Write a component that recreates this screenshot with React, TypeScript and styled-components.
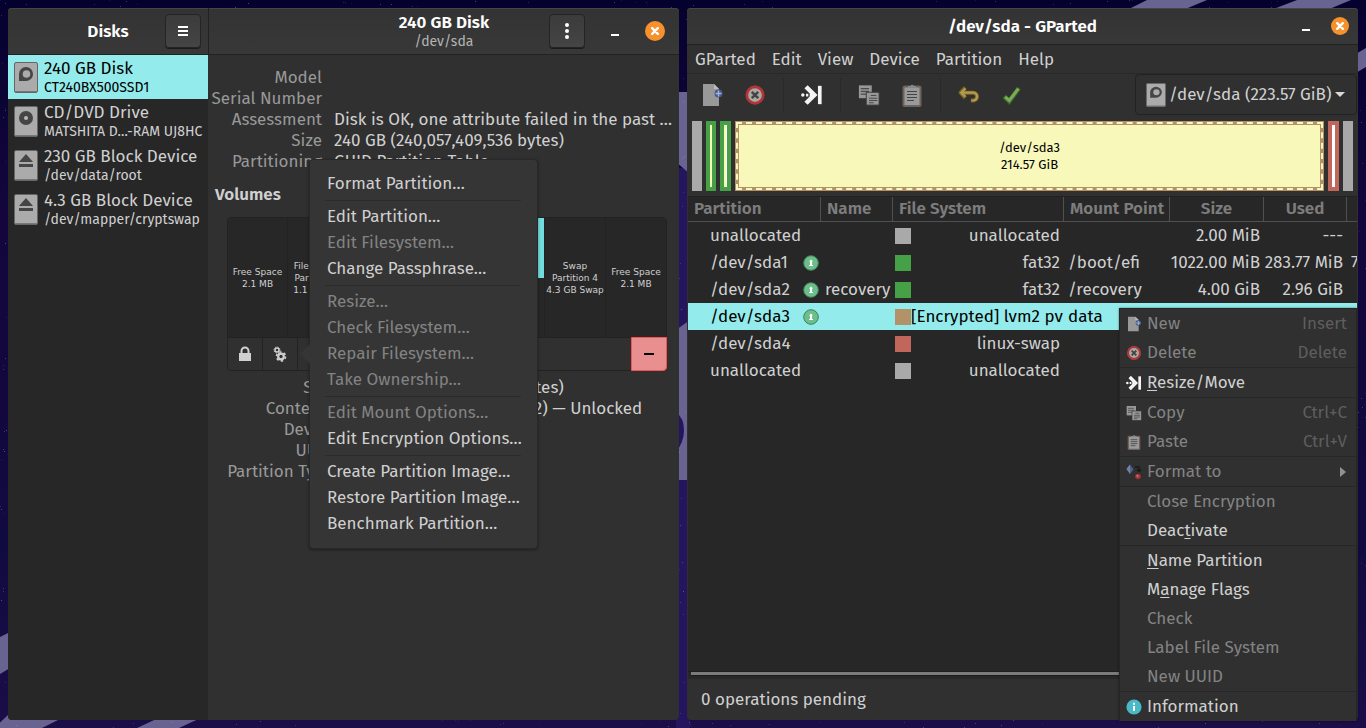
import React from "react";
import styled, { createGlobalStyle, css } from "styled-components";

const c = {
  window: "#303030",
  header: "#353535",
  view: "#272727",
  line: "#222222",
  text: "#d0d0d0",
  label: "#999999",
  dim: "#838383",
  accent: "#94ebeb",
  orange: "#f6912d",
};

const GlobalStyle = createGlobalStyle`
  *, *::before, *::after { box-sizing: border-box; }
  body {
    margin: 0;
    background: #0e0536;
    color: ${c.text};
    font: 17px/21px "Fira Sans", "Noto Sans", sans-serif;
  }
  button, select { font: inherit; color: inherit; border: 0; margin: 0; padding: 0; background: none; }
  h1, h2, p, ul, dl, dd { margin: 0; padding: 0; }
  ul { list-style: none; }
`;

/* ---------- desktop ---------- */

const Desktop = styled.div`
  position: relative;
  min-height: 100vh;
  padding: 8px;
  display: flex;
  gap: 8px;
  overflow: hidden;
`;

const WallpaperSvg = styled.svg`
  position: absolute;
  inset: 0;
  width: 100%;
  height: 100%;
`;

const stars = Array.from({ length: 3600 }, (_, i) => ({
  x: (i * 769 + ((i * i) % 97) * 13) % 1366,
  y: (i * 431 + ((i * i) % 61) * 7) % 728,
  o: 0.08 + ((i * 7) % 10) / 30,
}));

const Wallpaper = () => (
  <WallpaperSvg viewBox="0 0 1366 728" preserveAspectRatio="none" aria-hidden="true">
    <defs>
      <linearGradient id="sky" x1="0" y1="0" x2="0" y2="1">
        <stop offset="0" stopColor="#05012f" />
        <stop offset="0.3" stopColor="#14063c" />
        <stop offset="0.75" stopColor="#110a40" />
        <stop offset="1" stopColor="#1b0d48" />
      </linearGradient>
    </defs>
    <rect width="1366" height="728" fill="url(#sky)" />
    <path d="M676 168h14v560h-14z" fill="#25155f" />
    <g fill="#696391">
      <path d="M676 92h14v82l-14-12z" />
      <path d="M676 330l14-10v160h-14z" />
      <path d="M0 637l10-5v36l-10 6z" />
      <path d="M8 715h60l-26 13H-6z" />
      <path d="M165 715h42l-28 13h-42z" />
      <path d="M1147 0h60l-24 10h-56z" />
      <path d="M1297 0h54l-24 10h-56z" />
      <path d="M1354 55l12-7v19l-12 7z" />
    </g>
    <path d="M676 412q8 6 8 18t-8 22z" fill="#25155f" />
    {stars.map((s, i) => (
      <rect key={i} x={s.x} y={s.y} width="1" height="1" fill="#b5a8e0" opacity={s.o} />
    ))}
  </WallpaperSvg>
);

const Window = styled.section`
  position: relative;
  flex: 1 1 0;
  min-width: 0;
  display: flex;
  flex-direction: column;
  background: ${c.window};
  border-radius: 4px;
`;

const HeaderBar = styled.header<{ $height: number }>`
  display: flex;
  height: ${(p) => p.$height}px;
  background: linear-gradient(#333333, #383838);
  border-bottom: 1px solid ${c.line};
  border-radius: 4px 4px 0 0;
  box-shadow: inset 0 1px #454543;
`;

const HeaderArea = styled.div<{ $end: number }>`
  flex: 1;
  display: grid;
  grid-template-columns: 1fr auto 1fr;
  align-items: center;
  padding: 0 ${(p) => p.$end}px;
`;

const HeaderControls = styled.div<{ $gap: number }>`
  grid-column: 3;
  display: flex;
  justify-content: flex-end;
  align-items: center;
  gap: ${(p) => p.$gap}px;
`;

const SidebarHeader = styled.div`
  width: 201px;
  display: grid;
  grid-template-columns: 1fr auto 1fr;
  align-items: center;
  padding: 0 7px;
  border-right: 1px solid ${c.line};
`;

const TitleGroup = styled.div`
  grid-column: 2;
  text-align: center;
`;

const Title = styled.h1`
  font-size: 17px;
  line-height: 21px;
  font-weight: 600;
  color: #ffffff;
`;

const Subtitle = styled.p`
  font-size: 14px;
  line-height: 18px;
  color: #b4b4b4;
`;

const HeaderButton = styled.button`
  width: 36px;
  height: 34px;
  display: grid;
  place-items: center;
  justify-self: end;
  grid-column: 3;
  border: 1px solid #242424;
  border-radius: 4px;
  background: linear-gradient(#3b3b3b, #454545);
  box-shadow: 0 1px #1a1a1a;
`;

const MinimizeButton = styled.button`
  width: 20px;
  height: 20px;
  display: grid;
  place-items: center;
  padding-top: 7px;
  &::after { content: ""; width: 8px; height: 2px; background: #ffffff; }
`;

const CloseButton = styled.button<{ $size: number }>`
  width: ${(p) => p.$size}px;
  height: ${(p) => p.$size}px;
  display: grid;
  place-items: center;
  border-radius: 50%;
  background: ${c.orange};
`;

const CloseGlyph = () => (
  <svg width="8" height="8" viewBox="0 0 8 8" stroke="#fff" strokeWidth="2.4" strokeLinecap="round">
    <path d="M1.2 1.2l5.6 5.6M6.8 1.2L1.2 6.8" />
  </svg>
);

/* ---------- icons ---------- */

type DriveKind = "hdd" | "optical" | "removable";

const DriveIcon = ({ kind, width = 24, height = 31 }: { kind: DriveKind; width?: number; height?: number }) => (
  <svg width={width} height={height} viewBox="0 0 24 31" preserveAspectRatio="none" aria-hidden="true">
    <rect x="0.5" y="0.5" width="23" height="30" rx="1.5" fill="#ababab" stroke="#666" />
    <path d="M1 29.5h22" stroke="#777" />
    {kind === "hdd" && (
      <>
        <path d="M12 5a7 7 0 1 1 0 14H5v-7a7 7 0 0 1 7-7z" fill="#454545" />
        <circle cx="12.5" cy="12" r="3.8" fill="#ababab" />
      </>
    )}
    {kind === "optical" && (
      <>
        <circle cx="12" cy="12" r="7" fill="#454545" />
        <circle cx="12" cy="12" r="2" fill="#b8b8b8" />
      </>
    )}
    {kind === "removable" && <path d="M12 4l7 8H5zM5 14h14v3H5z" fill="#454545" />}
  </svg>
);

const NewIcon = ({ size }: { size: number }) => (
  <svg width={size} height={size} viewBox="0 0 24 24" aria-hidden="true">
    <path d="M3 1h11l5 5v17H3z" fill="#999" />
    <path d="M14 1v5h5z" fill="#bbb" />
    <circle cx="18.5" cy="10.5" r="4" fill="#46598a" />
    <path d="M15.5 10.5h6M18.5 7.5v6" stroke="#a3b4da" strokeWidth="1.5" />
  </svg>
);

const DeleteIcon = ({ size }: { size: number }) => (
  <svg width={size} height={size} viewBox="0 0 24 24" aria-hidden="true">
    <circle cx="12" cy="12" r="10" fill="#aaa7a5" stroke="#9e2a2a" />
    <circle cx="12" cy="12" r="8.8" fill="none" stroke="#b23434" strokeWidth="2.6" />
    <path d="M8.5 8.5l7 7M15.5 8.5l-7 7" stroke="#444" strokeWidth="2.8" />
  </svg>
);

const ResizeIcon = ({ size }: { size: number }) => (
  <svg width={size} height={size} viewBox="0 0 24 24" aria-hidden="true">
    <path d="M5.500 3l9 9-9 9" fill="none" stroke="#f4f4f4" strokeWidth="5" />
    <path d="M5.500 12h2.500M9.500 12h3" stroke="#f4f4f4" strokeWidth="3" />
    <circle cx="2" cy="12" r="1.9" fill="#f4f4f4" />
    <path d="M20.500 2v20" stroke="#f4f4f4" strokeWidth="4" />
  </svg>
);

const CopyIcon = ({ size }: { size: number }) => (
  <svg width={size} height={size} viewBox="0 0 24 24" aria-hidden="true">
    <rect x="1" y="1.5" width="14" height="14" fill="#989898" />
    <path d="M3 5h9M3 8h9M3 11h6" stroke="#4a4a4a" strokeWidth="1.2" />
    <rect x="9" y="9" width="14" height="14" fill="#989898" stroke="#3a3a3a" />
    <path d="M14 12.5h6M12 15.5h9M12 18h9M12 20.500h5" stroke="#4a4a4a" strokeWidth="1.2" />
  </svg>
);

const PasteIcon = ({ size }: { size: number }) => (
  <svg width={size} height={size} viewBox="0 0 24 24" aria-hidden="true">
    <rect x="3.5" y="3.5" width="17" height="19.5" rx="1" fill="#9a9a9a" stroke="#6f625b" strokeWidth="2" />
    <path d="M8 5V3h2.500a1.800 1.800 0 0 1 3.400 0H16v2z" fill="#888" />
    <path d="M7 8.5h10M7 11.5h10M7 14.5h10M7 17.5h7" stroke="#444" strokeWidth="1.2" />
  </svg>
);

const UndoIcon = ({ size }: { size: number }) => (
  <svg width={size} height={size} viewBox="0 0 24 24" fill="none" aria-hidden="true">
    <path d="M8 4L3 9.500 8 15M4 9.500h12.500a4 4 0 0 1 0 8.500H14" stroke="#7b6722" strokeWidth="4.5" strokeLinejoin="round" />
    <path d="M8 5L3.500 9.500 8 14M4 9.500h12.500a4 4 0 0 1 0 8.500H14.500" stroke="#b39b52" strokeWidth="2.4" />
  </svg>
);

const ApplyIcon = ({ size }: { size: number }) => (
  <svg width={size} height={size} viewBox="0 0 24 24" fill="none" aria-hidden="true">
    <path d="M3.500 13.500l5.500 5.500L19.500 4.500" stroke="#3d6b28" strokeWidth="5" />
    <path d="M4.500 14l4.500 4L19 5" stroke="#78ab55" strokeWidth="3.4" />
  </svg>
);

const FormatIcon = ({ size }: { size: number }) => (
  <svg width={size} height={size} viewBox="0 0 16 16" aria-hidden="true">
    <path d="M4 0.500l3.500 5L4 10 0.500 5z" fill="#4e608e" />
    <path d="M4 0.500V10L0.500 5z" fill="#72829f" />
    <path d="M9 3h4v4M11 5.500l2 2 2-2" fill="none" stroke="#191919" strokeWidth="1.3" />
    <circle cx="12" cy="12.5" r="2.8" fill="#a03434" />
    <circle cx="11.5" cy="12" r="1.2" fill="#c46a6a" />
  </svg>
);

const InfoIcon = ({ size }: { size: number }) => (
  <svg width={size} height={size} viewBox="0 0 16 16" aria-hidden="true">
    <circle cx="8" cy="8" r="7.6" fill="#49b9c7" />
    <path d="M7 3.800h2v2H7zM7 7h2v5H7z" fill="#fff" />
  </svg>
);

const MountedIcon = () => (
  <svg width="16" height="16" viewBox="0 0 16 16" role="img" aria-label="In use">
    <circle cx="8" cy="8" r="7.3" fill="#6cbf8b" stroke="#43805c" />
    <path d="M8 4.600l2 1.800H9V10h1v1H6v-1h1V6.400H6z" fill="#fff" />
  </svg>
);

const LockIcon = () => (
  <svg width="14" height="16" viewBox="0 0 14 16" aria-hidden="true">
    <path d="M3.500 7V5a3.500 3.500 0 0 1 7 0v2" fill="none" stroke="#d0d0d0" strokeWidth="2" />
    <path d="M1 7h12v8H1z" fill="#d0d0d0" />
  </svg>
);

const GearsIcon = () => (
  <svg width="16" height="16" viewBox="0 0 16 16" fill="none" stroke="#d0d0d0" aria-hidden="true">
    <circle cx="5" cy="4" r="2" strokeWidth="1.5" />
    <circle cx="5" cy="4" r="3" strokeWidth="1" strokeDasharray="1.2 1.16" />
    <circle cx="9" cy="10.500" r="2.8" strokeWidth="2.2" />
    <circle cx="9" cy="10.500" r="4.5" strokeWidth="1.6" strokeDasharray="2.4 2.31" />
  </svg>
);

/* ---------- Disks window ---------- */

const DisksBody = styled.div`
  flex: 1;
  display: flex;
`;

const Sidebar = styled.nav`
  width: 200px;
  background: ${c.view};
  border-radius: 0 0 0 4px;
`;

const DeviceLink = styled.a<{ $active?: boolean }>`
  height: 44px;
  display: flex;
  align-items: center;
  gap: 6px;
  padding-left: 6px;
  color: ${(p) => (p.$active ? "#000000" : c.text)};
  background: ${(p) => (p.$active ? c.accent : "transparent")};
  text-decoration: none;
  white-space: nowrap;
`;

const DeviceName = styled.span`
  display: block;
  line-height: 21px;
`;

const DeviceDetail = styled.span`
  display: block;
  font-size: 14px;
  line-height: 18px;
`;

const DiskContent = styled.main`
  flex: 1;
  min-width: 0;
  padding: 12px 12px 12px 0;
`;

const Facts = styled.dl<{ $label: number; $gap: number }>`
  display: grid;
  grid-template-columns: ${(p) => p.$label}px 1fr;
  column-gap: ${(p) => p.$gap}px;
  grid-auto-rows: 21px;
  white-space: nowrap;
`;

const FactLabel = styled.dt`
  color: ${c.label};
  justify-self: end;
`;

const FactValue = styled.dd``;

const SectionTitle = styled.h2`
  margin: 12px 0 12px 7px;
  font-size: 17px;
  line-height: 21px;
  font-weight: 600;
`;

const VolumeBox = styled.div`
  margin: 0 0 6px 19px;
  border: 1px solid ${c.line};
  border-radius: 4px;
`;

const VolumeMap = styled.div`
  display: grid;
  grid-template-columns: 59px 60px 60px 1fr 60px 61px;
  height: 120px;
  background: ${c.view};
  border-bottom: 1px solid ${c.line};
`;

const Volume = styled.div<{ $active?: boolean }>`
  display: flex;
  flex-direction: column;
  justify-content: center;
  overflow: hidden;
  color: ${(p) => (p.$active ? "#000000" : c.text)};
  background: ${(p) => (p.$active ? "#73dcdc" : "transparent")};
  font: 9px/12px "DejaVu Sans", sans-serif;
  text-align: center;
  white-space: nowrap;
  & + & { border-left: 1px solid ${c.line}; }
`;

const VolumeStack = styled.div`
  display: grid;
  grid-template-rows: 1fr 1fr;
  border-left: 1px solid ${c.line};
  border-right: 1px solid ${c.line};
`;

const VolumeTools = styled.div`
  display: flex;
  height: 32px;
`;

const MenuAnchor = styled.div`
  position: relative;
  display: flex;
`;

const VolumeButton = styled.button`
  width: 35px;
  display: grid;
  place-items: center;
  border-right: 1px solid ${c.line};
`;

const RemoveButton = styled.button`
  width: 36px;
  margin: -1px -1px -1px auto;
  display: grid;
  place-items: center;
  background: #ea8f8f;
  border: 1px solid #f05454;
  border-radius: 0 0 4px 0;
  &::after { content: ""; width: 10px; height: 2px; background: #000000; }
`;

const Popover = styled.div`
  position: absolute;
  z-index: 2;
  left: calc(100% + 11px);
  top: 50%;
  transform: translateY(-50%);
  width: 229px;
  padding: 11px 16px 11px 17px;
  background: ${c.header};
  border: 1px solid #282828;
  border-radius: 4px;
  box-shadow: 0 1px 3px rgba(0, 0, 0, 0.4);
  &::before {
    content: "";
    position: absolute;
    left: -10px;
    top: 50%;
    margin-top: -10px;
    border: solid transparent;
    border-width: 10px 10px 10px 0;
    border-right-color: ${c.header};
  }
`;

const PopoverItem = styled.button`
  display: block;
  width: 100%;
  height: 26px;
  line-height: 26px;
  text-align: left;
  white-space: nowrap;
  &:disabled { color: ${c.dim}; }
`;

const PopoverRule = styled.hr`
  height: 1px;
  margin: 3px 0 3px -2px;
  border: 0;
  background: #2b2b2b;
`;

/* ---------- GParted window ---------- */

const MenuBar = styled.nav`
  display: flex;
  align-items: center;
  gap: 16px;
  height: 29px;
  padding: 0 8px;
  border-bottom: 1px solid #292929;
`;

const MenuBarButton = styled.button``;

const ToolBar = styled.div`
  display: flex;
  align-items: center;
  height: 41px;
  padding: 0 1px 0 3px;
`;

const ToolButton = styled.button`
  width: 43px;
  height: 36px;
  display: grid;
  place-items: center;
`;

const ToolRule = styled.span`
  width: 1px;
  height: 34px;
  margin: 0 6px 0 7px;
  background: #292929;
`;

const DevicePicker = styled.label`
  display: flex;
  align-items: center;
  align-self: stretch;
  gap: 3px;
  margin-left: auto;
  padding: 0 11px 0 10px;
  border: 1px solid ${c.line};
  border-radius: 4px;
`;

const DeviceSelect = styled.select`
  appearance: none;
`;

const Caret = styled.span`
  border: solid transparent;
  border-width: 5px 5px 0;
  border-top-color: #d8d8d8;
`;

const PartitionMap = styled.div`
  display: flex;
  gap: 4px;
  height: 70px;
  margin: 6px 5px 5px;
`;

const MapBlock = styled.div<{ $color: string; $used?: string; $width?: number }>`
  width: ${(p) => p.$width ?? 10}px;
  padding: 4px;
  background: ${(p) => p.$color};
  ${(p) =>
    p.$used &&
    css`
      &::after { content: ""; display: block; height: 100%; background: ${p.$used}; }
    `}
`;

const MapMain = styled.div`
  flex: 1;
  padding: 1px;
  background: #b39169;
`;

const MapDashes = styled.div`
  height: 100%;
  border: 2px dashed #f8f8ba;
  padding: 1px;
`;

const MapFill = styled.div`
  height: 100%;
  display: flex;
  flex-direction: column;
  justify-content: center;
  background: #f8f8ba;
  color: #000000;
  text-align: center;
  font-size: 13px;
  line-height: 17px;
`;

const TableView = styled.div`
  flex: 1;
  margin: 0 1px;
  background: ${c.view};
  border-top: 1px solid ${c.line};
`;

const Table = styled.table`
  width: 100%;
  table-layout: fixed;
  border-collapse: separate;
  border-spacing: 0;
`;

const Th = styled.th<{ $align?: string }>`
  height: 25px;
  padding: 0 6px 2px;
  border-right: 1px solid #505050;
  border-bottom: 1px solid #505050;
  color: #7d7d7d;
  line-height: 21px;
  font-weight: 600;
  text-align: ${(p) => p.$align ?? "left"};
  white-space: nowrap;
  &:last-child { border-right: 0; }
`;

const Tr = styled.tr<{ $active?: boolean }>`
  height: 27px;
  color: ${(p) => (p.$active ? "#000000" : c.text)};
  background: ${(p) => (p.$active ? c.accent : "transparent")};
`;

const Td = styled.td<{ $number?: boolean }>`
  padding: 0 4px;
  overflow: hidden;
  white-space: nowrap;
  ${(p) => p.$number && css`
    padding-left: 0;
    text-align: right;
  `}
`;

const CellRow = styled.div<{ $start: number; $end?: number }>`
  display: flex;
  align-items: center;
  justify-content: space-between;
  margin: 0 ${(p) => p.$end ?? 0}px 0 ${(p) => p.$start}px;
`;

const Swatch = styled.span<{ $color: string }>`
  flex: none;
  width: 16px;
  height: 16px;
  background: ${(p) => p.$color};
`;

const ScrollTrack = styled.div`
  height: 7px;
  margin: 0 1px;
  padding: 0 3px;
  background: ${c.view};
  border-top: 1px solid #1f1f1f;
  &::after { content: ""; display: block; height: 3px; background: #7b7b7b; box-shadow: 0 1px #1c1c1c; }
`;

const StatusBar = styled.footer`
  height: 42px;
  padding: 0 14px;
  line-height: 41px;
  border-top: 1px solid #292929;
`;

const ContextMenu = styled.div`
  position: absolute;
  z-index: 2;
  top: 300px;
  right: 1px;
  width: 238px;
  background: ${c.window};
  border: 1px solid #252525;
  border-bottom: 0;
  box-shadow: 0 0 2px rgba(0, 0, 0, 0.5);
`;

const ContextItem = styled.button<{ $ruled?: boolean }>`
  display: grid;
  grid-template-columns: 16px 1fr auto;
  column-gap: 5px;
  align-items: center;
  width: 100%;
  height: ${(p) => (p.$ruled ? 30 : 29)}px;
  padding: 0 9px 0 6px;
  border-top: ${(p) => (p.$ruled ? "1px solid #272727" : "0")};
  text-align: left;
  &:disabled { color: ${c.dim}; }
`;

const IconSlot = styled.span`
  display: flex;
`;

const Mnemonic = styled.u`
  text-underline-offset: 2px;
  text-decoration-thickness: 1px;
`;

const Shortcut = styled.kbd`
  font: inherit;
  color: #5e5e5e;
`;

const SubmenuArrow = styled.span`
  margin-right: 1px;
  border: solid transparent;
  border-width: 5px 0 5px 6px;
  border-left-color: #929292;
`;

/* ---------- data ---------- */

const devices: { name: string; detail: string; kind: DriveKind }[] = [
  { name: "240 GB Disk", detail: "CT240BX500SSD1", kind: "hdd" },
  { name: "CD/DVD Drive", detail: "MATSHITA D…-RAM UJ8HC", kind: "optical" },
  { name: "230 GB Block Device", detail: "/dev/data/root", kind: "removable" },
  { name: "4.3 GB Block Device", detail: "/dev/mapper/cryptswap", kind: "removable" },
];

const diskFacts = [
  ["Model", ""],
  ["Serial Number", ""],
  ["Assessment", "Disk is OK, one attribute failed in the past …"],
  ["Size", "240 GB (240,057,409,536 bytes)"],
  ["Partitioning", "GUID Partition Table"],
];

const volumeFacts = [
  ["Size", "230 GB (230,392,070,144 bytes)"],
  ["Contents", "LUKS Encryption (version 2) — Unlocked"],
  ["Device", "/dev/sda3"],
  ["UUID", ""],
  ["Partition Type", ""],
];

const popoverGroups: [string, boolean][][] = [
  [["Format Partition…", true]],
  [["Edit Partition…", true], ["Edit Filesystem…", false], ["Change Passphrase…", true]],
  [["Resize…", false], ["Check Filesystem…", false], ["Repair Filesystem…", false], ["Take Ownership…", false]],
  [["Edit Mount Options…", false], ["Edit Encryption Options…", true]],
  [["Create Partition Image…", true], ["Restore Partition Image…", true], ["Benchmark Partition…", true]],
];

const grey = "#a9a9a9";
const green = "#46a046";
const brown = "#b39169";
const red = "#c1665a";

const partitions = [
  { dev: "unallocated", color: grey, fs: "unallocated", size: "2.00 MiB", used: "---" },
  { dev: "/dev/sda1", busy: true, color: green, fs: "fat32", mount: "/boot/efi", size: "1022.00 MiB", used: "283.77 MiB", unused: "738.23 MiB" },
  { dev: "/dev/sda2", busy: true, name: "recovery", color: green, fs: "fat32", mount: "/recovery", size: "4.00 GiB", used: "2.96 GiB" },
  { dev: "/dev/sda3", busy: true, color: brown, fs: "[Encrypted] lvm2 pv", mount: "data", size: "214.57 GiB", used: "214.57 GiB", active: true },
  { dev: "/dev/sda4", color: red, fs: "linux-swap", size: "4.00 GiB", used: "---" },
  { dev: "unallocated", color: grey, fs: "unallocated", size: "2.00 MiB", used: "---" },
];

type MenuEntry = {
  label: string;
  mnemonic?: number;
  icon?: React.ReactNode;
  shortcut?: string;
  submenu?: boolean;
  enabled?: boolean;
  ruled?: boolean;
};

const contextEntries: MenuEntry[] = [
  { label: "New", icon: <NewIcon size={16} />, shortcut: "Insert" },
  { label: "Delete", icon: <DeleteIcon size={16} />, shortcut: "Delete" },
  { label: "Resize/Move", mnemonic: 0, icon: <ResizeIcon size={16} />, enabled: true, ruled: true },
  { label: "Copy", icon: <CopyIcon size={16} />, shortcut: "Ctrl+C", ruled: true },
  { label: "Paste", icon: <PasteIcon size={16} />, shortcut: "Ctrl+V" },
  { label: "Format to", icon: <FormatIcon size={16} />, submenu: true, ruled: true },
  { label: "Close Encryption", ruled: true },
  { label: "Deactivate", mnemonic: 4, enabled: true },
  { label: "Name Partition", mnemonic: 0, enabled: true, ruled: true },
  { label: "Manage Flags", mnemonic: 1, enabled: true },
  { label: "Check" },
  { label: "Label File System" },
  { label: "New UUID" },
  { label: "Information", icon: <InfoIcon size={16} />, enabled: true, ruled: true },
];

const withMnemonic = (label: string, at?: number) =>
  at === undefined ? label : (
    <>
      {label.slice(0, at)}
      <Mnemonic>{label[at]}</Mnemonic>
      {label.slice(at + 1)}
    </>
  );

const FactList = ({ facts, label, gap }: { facts: string[][]; label: number; gap: number }) => (
  <Facts $label={label} $gap={gap}>
    {facts.map(([k, v]) => (
      <React.Fragment key={k}>
        <FactLabel>{k}</FactLabel>
        <FactValue>{v}</FactValue>
      </React.Fragment>
    ))}
  </Facts>
);

const VolumePopover = () => (
  <Popover role="menu">
    {popoverGroups.map((group, g) => (
      <React.Fragment key={g}>
        {g > 0 && <PopoverRule />}
        {group.map(([label, enabled]) => (
          <PopoverItem key={label} role="menuitem" disabled={!enabled}>{label}</PopoverItem>
        ))}
      </React.Fragment>
    ))}
  </Popover>
);

const DisksWindow = () => (
  <Window aria-label="Disks">
    <HeaderBar $height={47}>
      <SidebarHeader>
        <TitleGroup><Title>Disks</Title></TitleGroup>
        <HeaderButton aria-label="Main menu">
          <svg width="12" height="12" viewBox="0 0 12 12" fill="#fff"><path d="M1 1h10v2H1zM1 5h10v2H1zM1 9h10v2H1z" /></svg>
        </HeaderButton>
      </SidebarHeader>
      <HeaderArea $end={14}>
        <TitleGroup>
          <Title>240 GB Disk</Title>
          <Subtitle>/dev/sda</Subtitle>
        </TitleGroup>
        <HeaderControls $gap={20}>
          <HeaderButton aria-label="Drive options">
            <svg width="4" height="16" viewBox="0 0 4 16" fill="#fff">
              <circle cx="2" cy="2" r="2" /><circle cx="2" cy="8" r="2" /><circle cx="2" cy="14" r="2" />
            </svg>
          </HeaderButton>
          <MinimizeButton aria-label="Minimize" />
          <CloseButton $size={20} aria-label="Close"><CloseGlyph /></CloseButton>
        </HeaderControls>
      </HeaderArea>
    </HeaderBar>
    <DisksBody>
      <Sidebar aria-label="Devices">
        <ul>
          {devices.map((d, i) => (
            <li key={d.name}>
              <DeviceLink href="#" $active={i === 0}>
                <DriveIcon kind={d.kind} />
                <span>
                  <DeviceName>{d.name}</DeviceName>
                  <DeviceDetail>{d.detail}</DeviceDetail>
                </span>
              </DeviceLink>
            </li>
          ))}
        </ul>
      </Sidebar>
      <DiskContent>
        <FactList facts={diskFacts} label={114} gap={12} />
        <SectionTitle>Volumes</SectionTitle>
        <VolumeBox>
          <VolumeMap>
            <Volume><span>Free Space</span><span>2.1 MB</span></Volume>
            <Volume><span>Filesystem</span><span>Partition 1</span><span>1.1 GB FAT</span></Volume>
            <Volume><span>recovery</span><span>Partition 2</span><span>4.3 GB FAT</span></Volume>
            <VolumeStack>
              <Volume $active><span>data</span><span>Partition 3</span><span>230 GB LUKS</span></Volume>
              <Volume><span>LVM2 PV</span></Volume>
            </VolumeStack>
            <Volume><span>Swap</span><span>Partition 4</span><span>4.3 GB Swap</span></Volume>
            <Volume><span>Free Space</span><span>2.1 MB</span></Volume>
          </VolumeMap>
          <VolumeTools>
            <VolumeButton aria-label="Lock"><LockIcon /></VolumeButton>
            <MenuAnchor>
              <VolumeButton aria-label="Partition options"><GearsIcon /></VolumeButton>
              <VolumePopover />
            </MenuAnchor>
            <RemoveButton aria-label="Delete partition" />
          </VolumeTools>
        </VolumeBox>
        <FactList facts={volumeFacts} label={126} gap={3} />
      </DiskContent>
    </DisksBody>
  </Window>
);

const GPartedWindow = () => (
  <Window aria-label="GParted">
    <HeaderBar $height={37}>
      <HeaderArea $end={9}>
        <TitleGroup><Title>/dev/sda - GParted</Title></TitleGroup>
        <HeaderControls $gap={15}>
          <MinimizeButton aria-label="Minimize" />
          <CloseButton $size={18} aria-label="Close"><CloseGlyph /></CloseButton>
        </HeaderControls>
      </HeaderArea>
    </HeaderBar>
    <MenuBar>
      {["GParted", "Edit", "View", "Device", "Partition", "Help"].map((m) => (
        <MenuBarButton key={m}>{m}</MenuBarButton>
      ))}
    </MenuBar>
    <ToolBar>
      <ToolButton aria-label="New"><NewIcon size={24} /></ToolButton>
      <ToolButton aria-label="Delete"><DeleteIcon size={22} /></ToolButton>
      <ToolRule />
      <ToolButton aria-label="Resize/Move"><ResizeIcon size={22} /></ToolButton>
      <ToolRule />
      <ToolButton aria-label="Copy"><CopyIcon size={22} /></ToolButton>
      <ToolButton aria-label="Paste"><PasteIcon size={24} /></ToolButton>
      <ToolRule />
      <ToolButton aria-label="Undo"><UndoIcon size={22} /></ToolButton>
      <ToolButton aria-label="Apply"><ApplyIcon size={22} /></ToolButton>
      <DevicePicker>
        <DriveIcon kind="hdd" width={20} height={24} />
        <DeviceSelect aria-label="Device"><option>/dev/sda (223.57 GiB)</option></DeviceSelect>
        <Caret />
      </DevicePicker>
    </ToolBar>
    <PartitionMap>
      <MapBlock $color={grey} />
      <MapBlock $color={green} $used="#f8f8ba" />
      <MapBlock $color={green} $width={11} $used="linear-gradient(90deg, #f8f8ba 2px, #ffffff 2px)" />
      <MapMain>
        <MapDashes>
          <MapFill><span>/dev/sda3</span><span>214.57 GiB</span></MapFill>
        </MapDashes>
      </MapMain>
      <MapBlock $color={red} $width={11} $used="#ffffff" />
      <MapBlock $color={grey} />
    </PartitionMap>
    <TableView>
      <Table>
        <colgroup>
          <col width="133" /><col width="72" /><col width="171" /><col width="106" /><col width="94" /><col width="83" /><col />
        </colgroup>
        <thead>
          <tr>
            <Th>Partition</Th>
            <Th>Name</Th>
            <Th>File System</Th>
            <Th>Mount Point</Th>
            <Th $align="center">Size</Th>
            <Th $align="center">Used</Th>
            <Th />
          </tr>
        </thead>
        <tbody>
          {partitions.map((p, i) => (
            <Tr key={i} $active={p.active}>
              <Td>
                <CellRow $start={18} $end={-2}>
                  <span>{p.dev}</span>
                  {p.busy && <MountedIcon />}
                </CellRow>
              </Td>
              <Td>{p.name}</Td>
              <Td>
                <CellRow $start={-2}>
                  <Swatch $color={p.color} />
                  <span>{p.fs}</span>
                </CellRow>
              </Td>
              <Td>{p.mount}</Td>
              <Td $number>{p.size}</Td>
              <Td $number>{p.used}</Td>
              <Td>{p.unused}</Td>
            </Tr>
          ))}
        </tbody>
      </Table>
    </TableView>
    <ScrollTrack />
    <StatusBar>0 operations pending</StatusBar>
    <ContextMenu role="menu">
      {contextEntries.map((e) => (
        <ContextItem key={e.label} role="menuitem" disabled={!e.enabled} $ruled={e.ruled}>
          <IconSlot>{e.icon}</IconSlot>
          <span>{withMnemonic(e.label, e.mnemonic)}</span>
          {e.shortcut && <Shortcut>{e.shortcut}</Shortcut>}
          {e.submenu && <SubmenuArrow />}
        </ContextItem>
      ))}
    </ContextMenu>
  </Window>
);

export default function App() {
  return (
    <>
      <GlobalStyle />
      <Desktop>
        <Wallpaper />
        <DisksWindow />
        <GPartedWindow />
      </Desktop>
    </>
  );
}
